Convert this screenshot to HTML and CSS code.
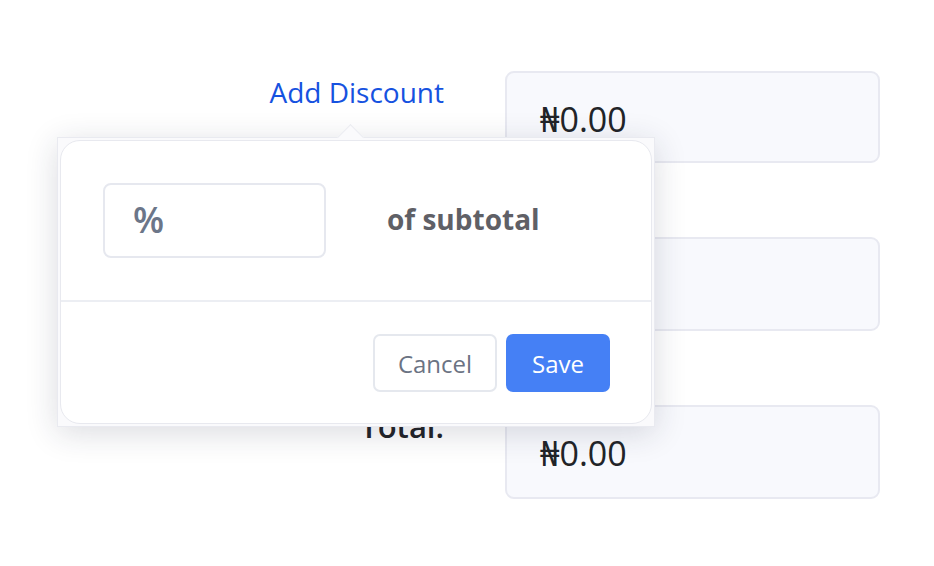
FILE: index.html
```html
<!DOCTYPE html>
<html>
<head>
<meta charset="utf-8">
<link rel="stylesheet" href="styles.css">
</head>
<body>
<div class="page">
  <div class="totals">
    <div class="label"><a class="link">Add Discount</a></div>
    <div class="field field-first"><span class="amount">₦0.00</span></div>
    <div class="label"></div>
    <div class="field"></div>
    <div class="label"><span class="strong">Total:</span></div>
    <div class="field"><span class="amount">₦0.00</span></div>
  </div>

  <div class="popover">
    <div class="arrow"></div>
    <div class="card">
      <div class="card-body">
        <div class="pct-input"><span class="pct">%</span></div>
        <div class="of">of subtotal</div>
      </div>
      <div class="card-foot">
        <button class="btn btn-cancel">Cancel</button>
        <button class="btn btn-save">Save</button>
      </div>
    </div>
  </div>
</div>
</body>
</html>
```

FILE: styles.css
```css
* { box-sizing: border-box; }
html, body { margin: 0; padding: 0; background: #fff; }
body {
  font-family: "Open Sans", "Noto Sans", sans-serif;
  color: #222428;
}
.page {
  position: relative;
  width: 934px;
  height: 566px;
  overflow: hidden;
}
.totals {
  display: grid;
  grid-template-columns: 444px 375px;
  column-gap: 61px;
  row-gap: 74px;
  padding-top: 71px;
}
.label {
  text-align: right;
  padding-top: 2px;
  font-size: 28px;
  line-height: 38px;
}
.link { color: #1652e0; }
.strong { font-size: 31px; font-weight: 600; color: #222428; }
.field {
  height: 94px;
  background: #f8f9fd;
  border: 2px solid #e8e9f1;
  border-radius: 9px;
  padding: 24px 0 0 33px;
}
.field-first { height: 92px; }
.amount {
  font-size: 34px;
  line-height: 44px;
  color: #222428;
}

.popover {
  position: absolute;
  left: 57px;
  top: 137px;
  width: 598px;
  height: 290px;
  border: 1px solid #e9eaf0;
  background: #fafafc;
  box-shadow: 0 6px 30px rgba(30, 35, 60, 0.16);
  padding: 2px;
}
.arrow {
  position: absolute;
  left: 283px;
  top: -10px;
  width: 19px;
  height: 19px;
  background: #fafafc;
  border-left: 1px solid #ebecf1;
  border-top: 1px solid #ebecf1;
  transform: rotate(45deg);
  z-index: 0;
}
.card {
  position: relative;
  z-index: 1;
  height: 100%;
  background: #fff;
  border: 1px solid #e8e9ef;
  border-radius: 20px;
  display: flex;
  flex-direction: column;
}
.card-body {
  height: 161px;
  border-bottom: 2px solid #eceef3;
  display: flex;
  align-items: flex-start;
  padding: 42px 0 0 42px;
}
.pct-input {
  width: 223px;
  height: 75px;
  border: 2px solid #e6e8ef;
  border-radius: 8px;
  padding: 13px 0 0 28px;
}
.pct {
  font-size: 36px;
  line-height: 44px;
  font-weight: 600;
  color: #6c7689;
}
.of {
  margin-left: 61px;
  margin-top: 17px;
  font-size: 28px;
  line-height: 38px;
  font-weight: 700;
  color: #5f6066;
}
.card-foot {
  flex: 1;
  display: flex;
  justify-content: flex-end;
  align-items: flex-start;
  gap: 9px;
  padding: 32px 41px 0 0;
}
.btn {
  font-family: "Open Sans", "Noto Sans", sans-serif;
  font-size: 24px;
  height: 58px;
  border-radius: 7px;
  cursor: pointer;
}
.btn-cancel {
  width: 124px;
  background: #fff;
  border: 2px solid #e5e8ee;
  color: #6b7383;
}
.btn-save {
  width: 104px;
  background: #4580f5;
  border: none;
  color: #fff;
}
```
